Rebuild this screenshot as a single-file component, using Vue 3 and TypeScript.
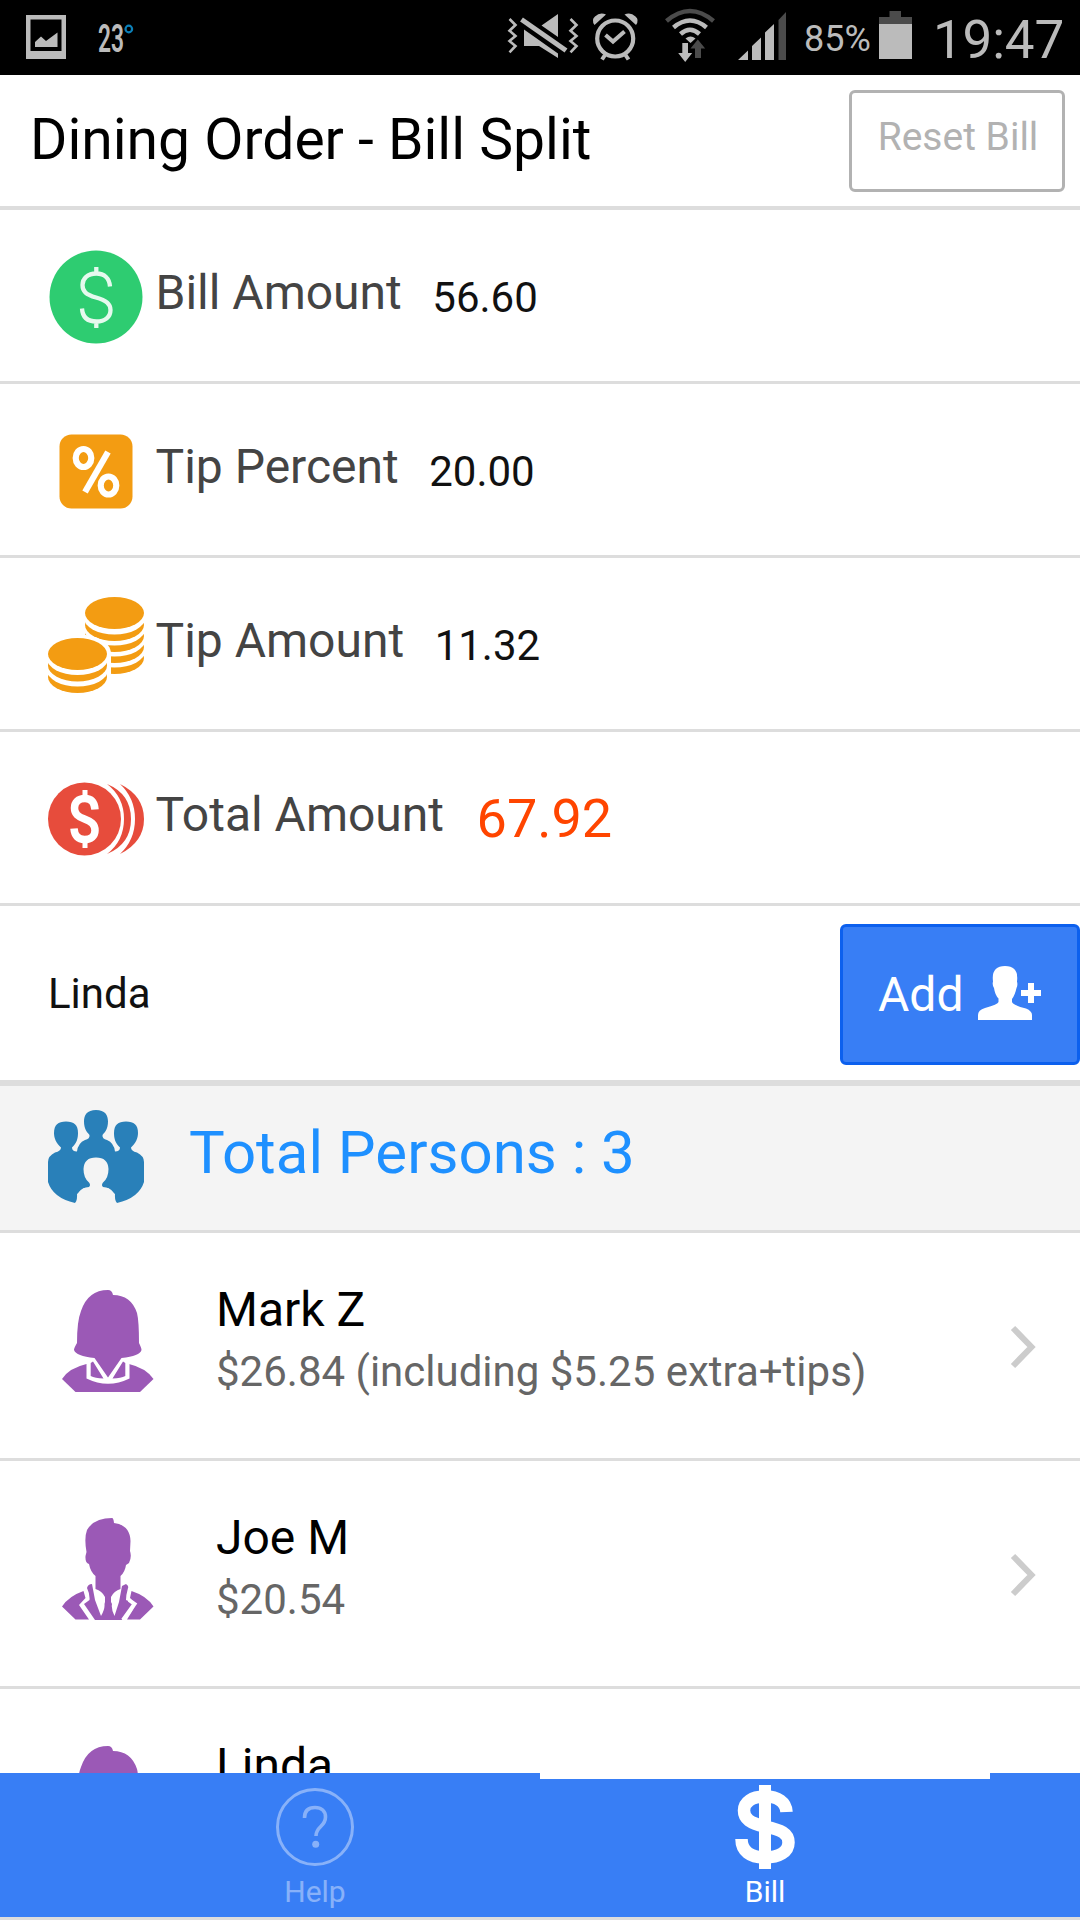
<script setup lang="ts">
interface AmountRow {
  id: string
  label: string
  value: string
  highlight?: boolean
}

interface Person {
  name: string
  detail: string
  avatar: 'woman' | 'man'
}

const amounts: AmountRow[] = [
  { id: 'bill', label: 'Bill Amount', value: '56.60' },
  { id: 'percent', label: 'Tip Percent', value: '20.00' },
  { id: 'tip', label: 'Tip Amount', value: '11.32' },
  { id: 'total', label: 'Total Amount', value: '67.92', highlight: true },
]

const persons: Person[] = [
  { name: 'Mark Z', detail: '$26.84 (including $5.25 extra+tips)', avatar: 'woman' },
  { name: 'Joe M', detail: '$20.54', avatar: 'man' },
  { name: 'Linda', detail: '$20.54', avatar: 'woman' },
]
</script>

<template>
  <div class="screen">
    <div class="status">
      <svg class="picture" width="40" height="44" viewBox="0 0 40 44">
        <path fill="#bbb" fill-rule="evenodd" d="M0 0H40V44H0ZM4.500 4.500V36H35.500V4.500Z" />
        <path fill="#bbb" d="M9 32V27L15 21.500L20 26L31.500 17.500V32Z" />
      </svg>
      <svg class="temp" width="40" height="50" viewBox="0 -5 40 50">
        <text x="-1" y="34" font-size="38" font-weight="600" fill="#bbb" textLength="26" lengthAdjust="spacingAndGlyphs">23</text>
        <circle cx="29.800" cy="11" r="3.300" fill="none" stroke="#0c80b8" stroke-width="2.200" />
      </svg>
      <svg class="signals" width="285" height="75" viewBox="505 0 285 75">
        <g fill="none" stroke="#bbb" stroke-width="2.600">
          <path d="M509.500 19L515.500 25L509.500 30.700L515.500 36L509.500 41L515.500 46L509.500 52.300" />
          <path d="M570.500 19L576.500 25L570.500 30.700L576.500 36L570.500 41L576.500 46L570.500 52.300" />
        </g>
        <path d="M521.500 19.500L566 50.500" stroke="#bbb" stroke-width="5" />
        <path fill="#bbb" d="M541.500 25.500L558 14V37ZM524 29.500L558 53.500V58L539 46H524Z" />
        <circle cx="615.200" cy="38.500" r="18" fill="none" stroke="#bbb" stroke-width="4.200" />
        <path d="M605.500 35L613 41.500L624.500 31.500" fill="none" stroke="#bbb" stroke-width="4" />
        <path d="M605 55L602 59.500M625.500 55L628.500 59.500" stroke="#bbb" stroke-width="4" />
        <path fill="#bbb" d="M594.500 25Q591 20 595 16.500Q600 11.500 606 14.500ZM636 25Q639.500 20 635.500 16.500Q630.500 11.500 624.500 14.500Z" />
        <g fill="none" stroke="#bbb" stroke-width="4.500">
          <path d="M666.500 21Q690 1 713.500 21" stroke="#4b4b4b" />
          <path d="M673.500 27.500Q690 13.500 706.500 27.500" />
          <path d="M680.500 34Q690 25.500 699.500 34" />
        </g>
        <path fill="#bbb" d="M685.500 38.500Q690.500 34.500 695.500 38.500L690.500 43Z" />
        <path fill="#4b4b4b" d="M697.800 39.500L705.200 48.500H701V58H695V48.500H690.500Z" />
        <path fill="#bbb" d="M682.300 43H688V53H692.200L685.200 62L678.200 53H682.300Z" />
        <path fill="#bbb" d="M738 60L748 50.500V60ZM752 60V46L761 37.500V60ZM765 60V32.500L774 24V60Z" />
        <path fill="#4b4b4b" d="M778.500 60V20L786 12V60Z" />
      </svg>
      <span class="percent">85%</span>
      <svg class="battery" width="33" height="48" viewBox="0 0 33 48">
        <path fill="#4b4b4b" d="M10.500 0H22V6H33V14H0V6H10.500Z" />
        <path fill="#bbb" d="M0 13H33V48H0Z" />
      </svg>
      <span class="clock">19:47</span>
    </div>

    <header class="header">
      <h1>Dining Order - Bill Split</h1>
      <button class="reset">Reset Bill</button>
    </header>

    <main class="content">
      <div v-for="row in amounts" :key="row.id" class="amount">
        <svg class="icon" width="96" height="96" viewBox="0 0 96 96">
          <template v-if="row.id === 'bill'">
            <circle cx="48" cy="48" r="46.500" fill="#2ecc71" />
            <path d="M62 37.500C61.500 29.500 56.500 24.500 48.300 24.500C39.500 24.500 34.500 29.500 34.500 36C34.500 42.500 38 45.500 48 48.500C58.500 51.500 62.500 55 62.500 61C62.500 68 57 72.500 48.500 72.500C39.500 72.500 34.500 68 34 59.500M48.300 18V25M48.300 72V79" fill="none" stroke="#e6f9ee" stroke-width="4.300" />
          </template>
          <template v-else-if="row.id === 'percent'">
            <rect x="11.500" y="11.500" width="73" height="74" rx="12" fill="#f39c12" />
            <g fill="none" stroke="#fff" stroke-width="6.200">
              <ellipse cx="35.500" cy="35" rx="7.800" ry="9" />
              <ellipse cx="60.500" cy="62.500" rx="7.800" ry="9" />
              <path d="M60 29L37 69" />
            </g>
          </template>
          <template v-else-if="row.id === 'tip'">
            <g v-for="shift in [44, 33, 22, 11]" :key="shift">
              <ellipse cx="66.500" :cy="17 + shift" rx="29.500" ry="16" fill="#f39c12" />
              <ellipse cx="66.500" :cy="10 + shift" rx="30.500" ry="16.500" fill="#fff" />
            </g>
            <ellipse cx="66.500" cy="16" rx="29.500" ry="16" fill="#f39c12" />
            <path d="M-3 57C-3 31 63 31 63 57V96H-3Z" fill="#fff" />
            <g v-for="shift in [23, 11.500]" :key="'b' + shift">
              <ellipse cx="29.500" :cy="57 + shift" rx="29.500" ry="16" fill="#f39c12" />
              <ellipse cx="29.500" :cy="50 + shift" rx="30.500" ry="16.500" fill="#fff" />
            </g>
            <ellipse cx="29.500" cy="57" rx="29.500" ry="16" fill="#f39c12" />
          </template>
          <template v-else>
            <g transform="translate(0 11)">
              <circle cx="36.500" cy="37" r="36.500" fill="#e74c3c" />
              <path fill="#e74c3c" d="M59 2Q83 12 83 37Q83 62 59 72Q76 59 76 37Q76 15 59 2ZM72 2Q96 14 96 37Q96 60 72 72Q87 58 87 37Q87 16 72 2Z" />
              <path d="M47 27.500C46.500 20 43 16.500 37 16.500C30 16.500 26.500 20.500 26.500 26C26.500 32 30 34.500 36.500 37C43 39.500 47 42 47 48.500C47 54 43 57.500 36.500 57.500C30 57.500 26.500 53.500 26 46.500" fill="none" stroke="#fff" stroke-width="7.500" />
              <path d="M37 8V18M37 56V66" stroke="#fff" stroke-width="5" />
            </g>
          </template>
        </svg>
        <label>{{ row.label }}</label>
        <span class="value" :class="{ highlight: row.highlight }">{{ row.value }}</span>
      </div>

      <div class="add-row">
        <span class="new-name">Linda</span>
        <button class="add">
          <span>Add</span>
          <svg width="64" height="54" viewBox="0 0 64 54">
            <path fill="#fff" d="M0 54V49Q0 44 7 42Q20 38.500 20.500 36V32.500Q17 29 16 22Q14 19 15 15.500Q13 0 27 0Q41 0 39 15.500Q40 19 38.500 22Q37 29 34 33V36Q35 39 48 42.500Q54 45 54 49V54ZM50 17H56V24H63V30H56V37H50V30H43V24H50Z" />
          </svg>
        </button>
      </div>

      <div class="total">
        <svg width="96" height="94" viewBox="0 0 96 94">
          <path fill="#2980b9" d="M48 0C57 0 60 5 60 11.500C60 19 57 22 54.500 25Q54 29 59 30Q66 33 67 41.500Q72 41.500 72 37.500C67 33 66 28 66 23C66 15 70 11.500 78 11.500C86 11.500 90 15 90 23C90 28 88 33 83 37.500Q83 41 89 42.500Q96 46 96 52V72Q91 88 69 93Q66 90 67 84L60 78H36L29 84Q30 90 27 93Q5 88 0 72V52Q0 46 7 42.500Q13 41 13 37.500C8 33 6 28 6 23C6 15 10 11.500 18 11.500C26 11.500 30 15 30 23C30 28 29 33 24 37.500Q24 41.500 29 41.500Q30 33 37 30Q42 29 41.500 25C39 22 36 19 36 11.500C36 5 39 0 48 0Z" />
          <path fill="#f4f4f4" d="M29 94Q28 86 31 82Q34 77.500 41 77Q43 75 41 72.500Q35.500 68 35.500 59Q36 47.500 48 47.500Q60 47.500 60.500 59Q60.500 68 55 72.500Q53 75 55 77Q62 77.500 65 82Q68 86 67 94Z" />
        </svg>
        <h2>Total Persons : 3</h2>
      </div>

      <div v-for="(person, index) in persons" :key="index" class="person">
        <svg class="avatar" width="92" height="102" viewBox="0 0 92 102">
          <template v-if="person.avatar === 'woman'">
            <path fill="#9b59b6" d="M0 89Q7 78 24.500 74H67Q84 78 91.500 89L78 102H13.500Z" />
            <path fill="#fff" d="M24.500 66H67.500V88.500Q46 99 24.500 88.500Z" />
            <path fill="#9b59b6" d="M28.700 73L31 71.500L41.500 88.500Q33 88 28.700 86ZM63.300 73L61 71.500L50.500 88.500Q59 88 63.300 86Z" />
            <path fill="#9b59b6" d="M46 0Q50 0 51 5Q69 5 75 23Q77 31 77 53Q79.500 58 79.500 60Q78 66 59.500 68L46 87.500L32.500 68Q14 66 12 60Q12 58 15 53Q15 31 19 21Q26 0 46 0Z" />
          </template>
          <template v-else>
            <g fill="#9b59b6">
              <path d="M50 0Q51.500 0 52 5Q68 7 68.500 23L68 33Q70 39 67 45L64 47Q63 54 58.500 58V71Q52 73 49 79V84L50 86Q49 91 52.500 98L57 84L60 68L64 66Q67 68 66 70Q64 77 64 82L75 87L59.500 102H33L22 86L27.500 82Q28 76 25 70Q26 66 30 66L33 82L39 98Q43 91 42.500 86L43 84V79Q40 73 33.500 71V58Q28.500 54 27 46Q23 45 23.500 38L24.500 34Q22 20 25 12Q32 0 50 0Z" />
              <path d="M0 88.500Q7 78 21.500 73L23.500 80L17 87L27 101.500H13.500ZM91.500 88.500Q85 78 69.500 73L68 80L74 87L65 101.500H78Z" />
            </g>
            <path d="M67 82L72.500 86L61 102" stroke="#fff" stroke-width="4" fill="none" />
          </template>
        </svg>
        <div class="person-text">
          <div class="name">{{ person.name }}</div>
          <div class="detail">{{ person.detail }}</div>
        </div>
        <svg class="chevron" width="26" height="44" viewBox="0 0 26 44">
          <path d="M3 3L21.500 22L3 41" fill="none" stroke="#ccc" stroke-width="6" />
        </svg>
      </div>
    </main>

    <nav class="tabs">
      <div class="tab">
        <svg width="78" height="84" viewBox="0 0 78 84">
          <circle cx="39" cy="42" r="37.500" fill="none" stroke="#fff" stroke-width="3" />
          <path d="M28.500 33C28.500 25 33 22.500 39 22.500C45.500 22.500 49.500 26 49.500 32C49.500 42 40 41 40 51" fill="none" stroke="#fff" stroke-width="3.600" />
          <circle cx="39.700" cy="59.300" r="3.500" fill="#fff" />
        </svg>
        <span>Help</span>
      </div>
      <div class="tab active">
        <svg width="60" height="84" viewBox="0 0 60 84">
          <path d="M51.500 27C51 17 43 11.500 30 11.500C17 11.500 9 17 9 25.500C9 34 15 38 30 41.500C46 45 53.500 48 53.500 57.500C53.500 67 44 72.500 30 72.500C15 72.500 6.500 66 6.500 54" fill="none" stroke="#fff" stroke-width="12.500" />
          <path d="M24 0H36V84H24Z" fill="#fff" />
        </svg>
        <span>Bill</span>
      </div>
    </nav>
  </div>
</template>

<style>
body {
  margin: 0;
}
</style>

<style scoped>
* {
  box-sizing: border-box;
}

.screen {
  width: 1080px;
  height: 1920px;
  display: flex;
  flex-direction: column;
  overflow: hidden;
  background: #fff;
  border-bottom: 3px solid #ddd;
  font-family: Roboto, sans-serif;
  color: #000;
}

svg {
  display: block;
  flex: none;
}

button {
  font-family: inherit;
  padding: 0;
}

.status {
  display: flex;
  height: 75px;
  flex: none;
  background: #000;
  color: #bbb;
}

.picture {
  margin: 15px 33px 0 26px;
}

.temp {
  margin-top: 13px;
  overflow: visible;
}

.signals {
  margin-left: 366px;
}

.percent {
  width: 75px;
  margin-left: 14px;
  font-size: 36px;
  line-height: 78px;
}

.battery {
  margin-top: 11px;
}

.clock {
  margin-left: 21px;
  font-size: 53px;
  line-height: 80px;
  letter-spacing: -0.2px;
  white-space: nowrap;
}

.header {
  display: flex;
  align-items: center;
  justify-content: space-between;
  height: 135px;
  flex: none;
  padding: 0 15px 0 30px;
  border-bottom: 4px solid #ddd;
}

h1 {
  margin: 0 0 1px;
  font-size: 57px;
  font-weight: 400;
  line-height: 64px;
}

.reset {
  width: 216px;
  height: 102px;
  border: 3px solid #b2b2b2;
  border-radius: 6px;
  background: transparent;
  color: #b2b2b2;
  font-size: 39px;
  line-height: 84px;
  padding: 0 0 8px 2px;
}

.content {
  flex: 1;
  min-height: 0;
  overflow: hidden;
}

.amount {
  display: flex;
  align-items: center;
  height: 174px;
  padding: 3px 0 0 48px;
  border-bottom: 3px solid #ddd;
}

.amount label {
  margin: 0 30.5px 8px 11.5px;
  font-size: 48px;
  line-height: 60px;
  color: #444;
}

.value {
  margin-top: 2px;
  font-size: 42px;
  line-height: 50px;
  color: #111;
}

.value.highlight {
  margin-left: 2px;
  margin-top: 0;
  font-size: 54px;
  color: #ff4500;
}

.add-row {
  display: flex;
  align-items: center;
  justify-content: space-between;
  height: 180px;
  padding: 0 0 0 48px;
  border-bottom: 6px solid #ddd;
}

.new-name {
  margin-top: 1px;
  font-size: 42px;
  color: #111;
}

.add {
  display: flex;
  align-items: center;
  width: 240px;
  height: 141px;
  margin-top: 3px;
  padding-left: 35px;
  border: 3px solid #0c60ee;
  border-radius: 6px;
  background: #387ef5;
  color: #fff;
  font-size: 48px;
}

.add svg {
  margin: 0 0 3px 15px;
}

.total {
  display: flex;
  align-items: center;
  height: 147px;
  padding-left: 48px;
  border-bottom: 3px solid #ddd;
  background: #f4f4f4;
}

.total svg {
  margin-bottom: 2px;
}

.total h2 {
  margin: 0 0 10px 45px;
  font-size: 60px;
  font-weight: 400;
  line-height: 64px;
  color: #1e90ff;
}

.person {
  display: flex;
  align-items: center;
  height: 228px;
  padding: 0 44px 0 62px;
  border-bottom: 3px solid #ddd;
}

.avatar {
  margin-bottom: 9px;
}

.person-text {
  flex: 1;
  margin: 0 0 10px 62px;
}

.name {
  font-size: 48px;
  line-height: 62px;
}

.detail {
  font-size: 42px;
  line-height: 62px;
  color: #666;
}

.chevron {
  margin-top: 2px;
}

.tabs {
  display: flex;
  height: 144px;
  flex: none;
  padding: 0 90px;
  background: #387ef5;
}

.tab {
  display: flex;
  flex: 1;
  flex-direction: column;
  align-items: center;
  padding-top: 6px;
  border-top: 6px solid transparent;
  color: #fff;
  font-size: 30px;
  line-height: 36px;
}

.tab > * {
  opacity: 0.4;
}

.tab.active > * {
  opacity: 1;
}

.tab.active {
  border-top-color: #fff;
}

.tab span {
  margin-top: 5px;
}
</style>
